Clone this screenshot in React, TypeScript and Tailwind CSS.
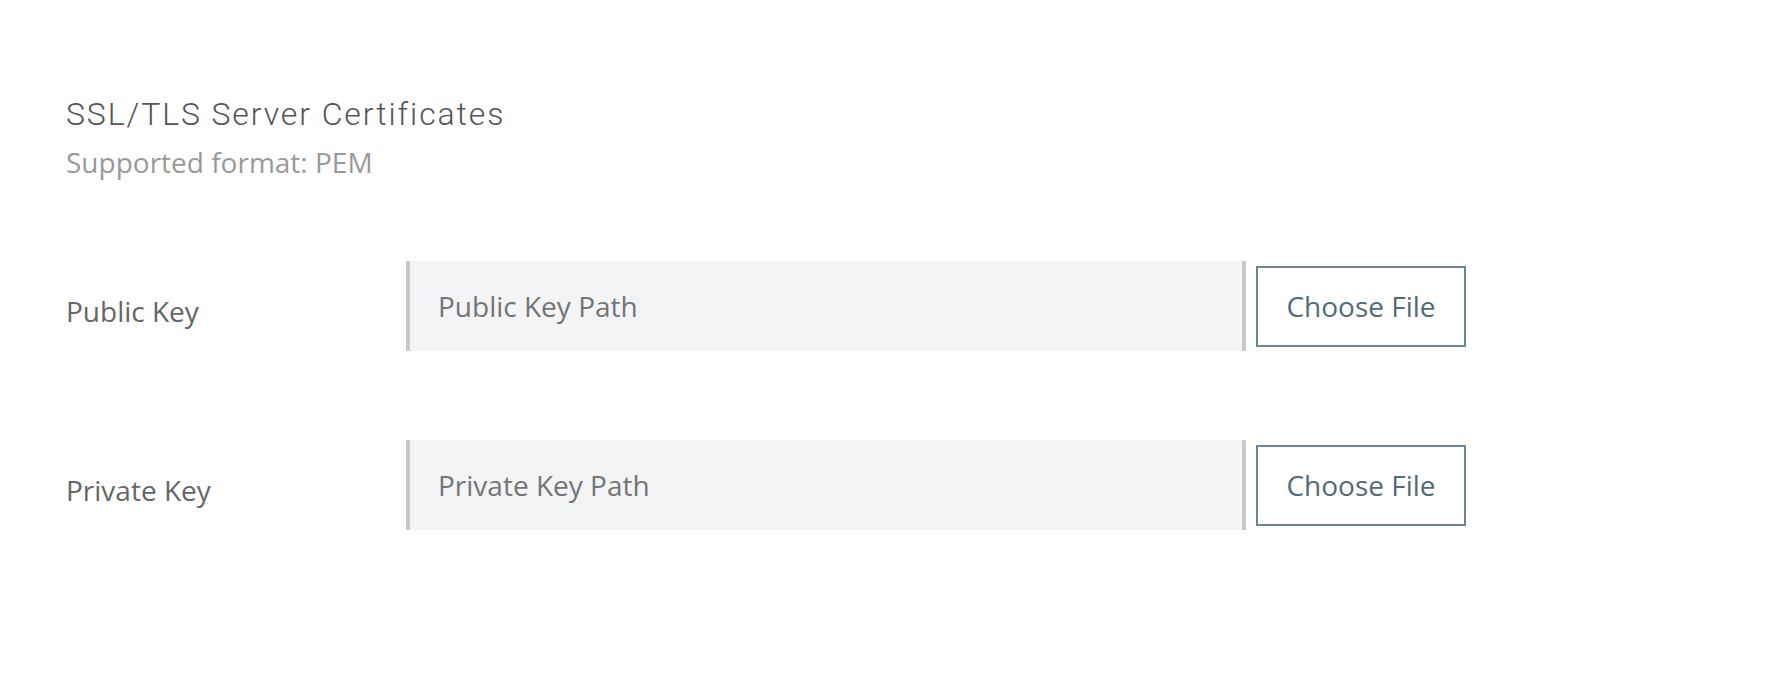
import React from "react";

const rows = [
  { label: "Public Key", placeholder: "Public Key Path" },
  { label: "Private Key", placeholder: "Private Key Path" },
];

const CertRow: React.FC<{ label: string; placeholder: string }> = ({ label, placeholder }) => (
  <div className="flex items-center">
    <label className="w-[340px] shrink-0 pt-[10px] text-[28px] text-[#666666]">{label}</label>
    <div className="flex items-center gap-[10px]">
      <input
        type="text"
        placeholder={placeholder}
        className="w-[840px] h-[90px] bg-[#f3f4f6] border-x-4 border-[#c8c8c8] pl-[28px] text-[28px] text-[#555] placeholder:text-[#757575] outline-none"
      />
      <button className="w-[210px] h-[81px] border-2 border-[#6c8593] bg-white text-[28px] text-[#546a78]">
        Choose File
      </button>
    </div>
  </div>
);

export default function App() {
  return (
    <div className="min-h-[698px] bg-white pl-[66px] pt-[94px] font-['Open_Sans',sans-serif]">
      <h2 className="font-['Roboto',sans-serif] font-light text-[32px] leading-[40px] tracking-[1.9px] text-[#555555]">
        SSL/TLS Server Certificates
      </h2>
      <p className="mt-[8px] text-[28px] leading-[40px] text-[#999999]">Supported format: PEM</p>
      <div className="mt-[79px] flex flex-col gap-[89px]">
        {rows.map((r) => (
          <CertRow key={r.label} label={r.label} placeholder={r.placeholder} />
        ))}
      </div>
    </div>
  );
}
